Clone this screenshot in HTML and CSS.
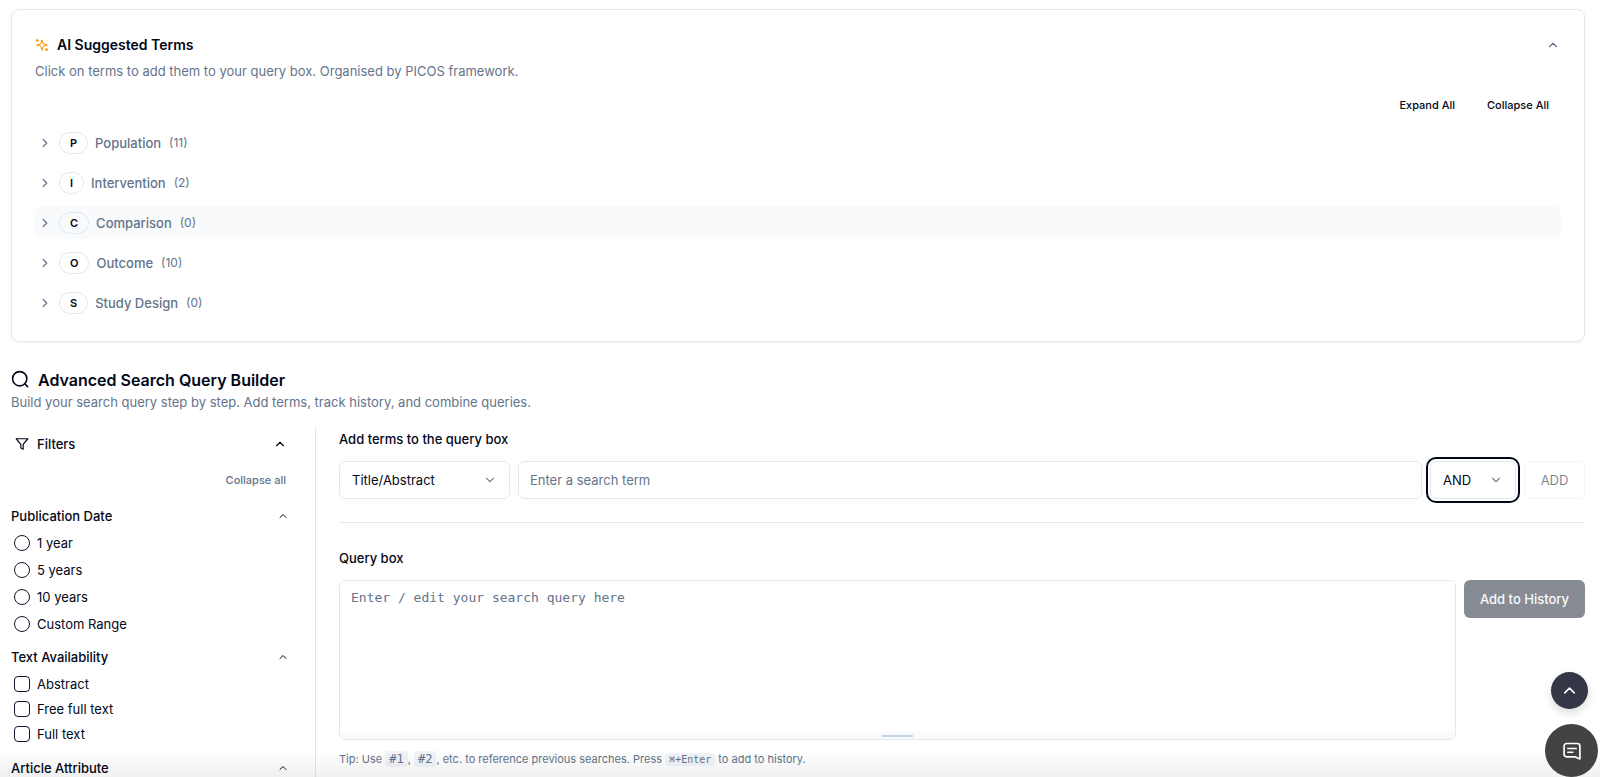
FILE: index.html
```html
<!DOCTYPE html>
<html lang="en">
<head>
    <meta charset="UTF-8">
    <meta name="viewport" content="width=device-width, initial-scale=1.0">
    <title>Advanced Search Query Builder</title>
    <link rel="stylesheet" href="styles.css">
</head>
<body>
    <!-- Shared icons -->
    <svg class="sprite" aria-hidden="true">
        <symbol id="chevron-up" viewBox="0 0 24 24"><path d="m18 15-6-6-6 6"/></symbol>
        <symbol id="chevron-down" viewBox="0 0 24 24"><path d="m6 9 6 6 6-6"/></symbol>
        <symbol id="chevron-right" viewBox="0 0 24 24"><path d="m9 18 6-6-6-6"/></symbol>
    </svg>

    <div class="page">
        <section class="card">
            <div class="card-header">
                <svg class="icon sparkles" viewBox="0 0 24 24"><path d="M9.937 15.5A2 2 0 0 0 8.5 14.063l-6.135-1.582a.5.5 0 0 1 0-.962L8.5 9.936A2 2 0 0 0 9.937 8.5l1.582-6.135a.5.5 0 0 1 .963 0L14.063 8.5A2 2 0 0 0 15.5 9.937l6.135 1.581a.5.5 0 0 1 0 .964L15.5 14.063a2 2 0 0 0-1.437 1.437l-1.582 6.135a.5.5 0 0 1-.963 0z" transform="translate(1.500 1.500) scale(0.875)"/><path d="M4 2v4M6 4H2M20 18v4M22 20h-4"/></svg>
                <h2>AI Suggested Terms</h2>
                <button type="button" class="icon-button" aria-label="Collapse suggested terms"><svg class="icon"><use href="#chevron-up"/></svg></button>
            </div>
            <p class="subtitle">Click on terms to add them to your query box. Organised by PICOS framework.</p>
            <div class="card-actions">
                <button type="button">Expand All</button>
                <button type="button">Collapse All</button>
            </div>
            <div class="terms">
                <button type="button" class="term"><svg class="icon"><use href="#chevron-right"/></svg><span class="pill">P</span><span>Population</span><span class="count">(11)</span></button>
                <button type="button" class="term"><svg class="icon"><use href="#chevron-right"/></svg><span class="pill">I</span><span>Intervention</span><span class="count">(2)</span></button>
                <button type="button" class="term active"><svg class="icon"><use href="#chevron-right"/></svg><span class="pill">C</span><span>Comparison</span><span class="count">(0)</span></button>
                <button type="button" class="term"><svg class="icon"><use href="#chevron-right"/></svg><span class="pill">O</span><span>Outcome</span><span class="count">(10)</span></button>
                <button type="button" class="term"><svg class="icon"><use href="#chevron-right"/></svg><span class="pill">S</span><span>Study Design</span><span class="count">(0)</span></button>
            </div>
        </section>

        <header class="builder-header">
            <h1><svg class="icon" viewBox="0 0 24 24"><circle cx="11" cy="11" r="9"/><path d="m21 21-3.600-3.600"/></svg>Advanced Search Query Builder</h1>
            <p class="subtitle">Build your search query step by step. Add terms, track history, and combine queries.</p>
        </header>

        <div class="builder">
            <aside class="filters">
                <button type="button" class="filters-toggle">
                    <svg class="icon" viewBox="0 0 24 24"><path d="M22 3H2l8 9.460V19l4 2v-8.540z"/></svg>
                    <span>Filters</span>
                    <svg class="icon end"><use href="#chevron-up"/></svg>
                </button>
                <button type="button" class="collapse-all">Collapse all</button>

                <button type="button" class="group-title">Publication Date<svg class="icon"><use href="#chevron-up"/></svg></button>
                <div class="options dates">
                    <label><input type="radio" name="date">1 year</label>
                    <label><input type="radio" name="date">5 years</label>
                    <label><input type="radio" name="date">10 years</label>
                    <label><input type="radio" name="date">Custom Range</label>
                </div>

                <button type="button" class="group-title">Text Availability<svg class="icon"><use href="#chevron-up"/></svg></button>
                <div class="options">
                    <label><input type="checkbox">Abstract</label>
                    <label><input type="checkbox">Free full text</label>
                    <label><input type="checkbox">Full text</label>
                </div>

                <button type="button" class="group-title">Article Attribute<svg class="icon"><use href="#chevron-up"/></svg></button>
            </aside>

            <main class="query">
                <label class="label" for="term">Add terms to the query box</label>
                <div class="term-row">
                    <div class="select field-select">
                        <select aria-label="Search field"><option>Title/Abstract</option></select>
                        <svg class="icon"><use href="#chevron-down"/></svg>
                    </div>
                    <input type="text" id="term" class="term-input" placeholder="Enter a search term">
                    <div class="select operator focused">
                        <select aria-label="Operator"><option>AND</option><option>OR</option><option>NOT</option></select>
                        <svg class="icon"><use href="#chevron-down"/></svg>
                    </div>
                    <button type="button" class="add" disabled>ADD</button>
                </div>
                <hr>
                <label class="label" for="query">Query box</label>
                <div class="query-row">
                    <div class="query-box">
                        <textarea id="query" placeholder="Enter / edit your search query here"></textarea>
                        <div class="resize"></div>
                    </div>
                    <button type="button" class="history" disabled>Add to History</button>
                </div>
                <p class="tip">Tip: Use <code>#1</code>, <code>#2</code>, etc. to reference previous searches. Press <kbd>⌘+Enter</kbd> to add to history.</p>
            </main>
        </div>
    </div>

    <div class="fade"></div>
    <div class="floating">
        <button type="button" class="to-top" aria-label="Back to top"><svg class="icon"><use href="#chevron-up"/></svg></button>
        <button type="button" class="chat" aria-label="Open chat"><svg class="icon" viewBox="0 0 24 24"><path d="M21.500 21.500V6a3 3 0 0 0-3-3h-13a3 3 0 0 0-3 3v10a3 3 0 0 0 3 3h10z"/><path d="M7 9h10M7 13.500h6"/></svg></button>
    </div>
</body>
</html>
```

FILE: styles.css
```css
* {
    box-sizing: border-box;
}
body {
    margin: 0;
    font-family: Inter, "Liberation Sans", sans-serif;
    font-size: 13px;
    line-height: 20px;
    color: #020817;
    background-color: #fff;
}
button, input, select, textarea {
    font: inherit;
    color: inherit;
}
button {
    border: none;
    padding: 0;
    background: none;
    cursor: pointer;
}
h1, h2, p {
    margin: 0;
}
.sprite {
    display: none;
}
.icon {
    width: 14px;
    height: 14px;
    flex: none;
    fill: none;
    stroke: currentColor;
    stroke-width: 2;
    stroke-linecap: round;
    stroke-linejoin: round;
}
.page {
    height: 100vh;
    overflow: hidden;
    padding: 9px 15px 0 11px;
}

/* Suggested terms */
.card {
    border: 1px solid #e2e8f0;
    border-radius: 8px;
    padding: 24px 23px 22px;
    box-shadow: 0 1px 2px rgba(0, 0, 0, 0.05);
}
.card-header {
    display: flex;
    align-items: center;
    gap: 8px;
    height: 22px;
}
.card-header h2 {
    flex: 1;
    font-size: 14px;
    font-weight: 600;
}
.sparkles {
    color: #fb9a0e;
}
.icon-button {
    display: flex;
    padding: 0 1px;
    color: #64748b;
}
.subtitle {
    font-size: 13px;
    color: #64748b;
}
.card .subtitle {
    margin-top: 5px;
}
.card-actions {
    display: flex;
    justify-content: flex-end;
    gap: 8px;
    margin: 9px 0 6px;
}
.card-actions button {
    padding: 0 12px;
    height: 30px;
    font-size: 11px;
    font-weight: 500;
}
.terms {
    display: flex;
    flex-direction: column;
    gap: 7px;
}
.term {
    display: flex;
    align-items: center;
    gap: 7px;
    height: 33px;
    padding: 0 3px;
    border-radius: 6px;
    font-weight: 500;
    color: #64748b;
}
.term.active {
    background-color: #f8fafc;
}
.pill {
    padding: 0 10px;
    border: 1px solid #e2e8f0;
    border-radius: 11px;
    font-size: 11px;
    font-weight: 600;
    color: #020817;
}
.count {
    margin-left: 1px;
    font-size: 12px;
    font-weight: 400;
}

/* Builder */
.builder-header {
    margin-top: 25px;
}
.builder-header h1 {
    display: flex;
    align-items: center;
    gap: 8px;
    height: 25px;
    font-size: 16px;
    font-weight: 600;
}
.builder-header h1 .icon {
    width: 19px;
    height: 19px;
}
.builder {
    display: flex;
    margin-top: 15px;
}
.filters {
    width: 305px;
    flex: none;
    height: 400px;
    padding-right: 23px;
    border-right: 1px solid #e2e8f0;
}
.filters-toggle {
    display: flex;
    align-items: center;
    gap: 8px;
    width: 100%;
    height: 34px;
    padding: 0 5px 0 4px;
    font-weight: 500;
}
.filters-toggle .end {
    margin-left: auto;
}
.collapse-all {
    display: block;
    margin: 9px 6px 16px auto;
    font-size: 11px;
    font-weight: 500;
    color: #64748b;
}
.group-title {
    display: flex;
    justify-content: space-between;
    align-items: center;
    width: 100%;
    font-weight: 500;
}
.group-title .icon {
    width: 12px;
    height: 12px;
    margin-right: 3px;
}
.options {
    display: flex;
    flex-direction: column;
    gap: 5px;
    padding: 7px 0 14px 3px;
}
.dates {
    gap: 7px;
    padding-bottom: 13px;
}
.options label {
    display: flex;
    align-items: center;
    gap: 7px;
}
.options input {
    appearance: none;
    width: 16px;
    height: 16px;
    margin: 0;
    border: 1px solid #0f172a;
    border-radius: 4px;
}
.options input[type="radio"] {
    border-radius: 50%;
}
.query {
    flex: 1;
    padding: 2px 0 0 23px;
}
.label {
    display: block;
    font-weight: 500;
}
.term-row {
    display: flex;
    gap: 8px;
    margin-top: 12px;
}
.select {
    position: relative;
    width: 171px;
    height: 38px;
}
.select.operator {
    width: 86px;
}
.select select {
    appearance: none;
    width: 100%;
    height: 100%;
    padding: 0 12px;
    border: 1px solid #e2e8f0;
    border-radius: 6px;
    background: none;
    outline: none;
}
.select.focused select {
    outline: 2px solid #020817;
    outline-offset: 2px;
}
.select .icon {
    position: absolute;
    right: 13px;
    top: 12px;
    color: #818591;
    pointer-events: none;
}
.term-input {
    flex: 1;
    min-width: 0;
    padding: 0 11px;
    border: 1px solid #e2e8f0;
    border-radius: 6px;
}
::placeholder {
    color: #64748b;
    opacity: 1;
}
.add {
    width: 61px;
    border: 1px solid #e2e8f0;
    border-radius: 6px;
    opacity: 0.5;
}
hr {
    margin: 23px 0 25px;
    border: none;
    border-top: 1px solid #e2e8f0;
}
.query-row {
    display: flex;
    align-items: flex-start;
    gap: 8px;
    margin-top: 12px;
}
.query-box {
    flex: 1;
    display: flex;
    flex-direction: column;
    height: 160px;
    border: 1px solid #e2e8f0;
    border-radius: 6px;
    overflow: hidden;
}
.query-box textarea {
    flex: 1;
    padding: 7px 11px;
    border: none;
    resize: none;
    font-family: "DejaVu Sans Mono", monospace;
    font-size: 13px;
    line-height: 20px;
}
.resize {
    display: flex;
    justify-content: center;
    align-items: center;
    height: 7px;
    background-color: #f8fafc;
}
.resize::before {
    content: "";
    width: 31px;
    height: 2px;
    background-color: #cbd5e1;
}
.history {
    width: 121px;
    height: 38px;
    border-radius: 6px;
    background-color: #878b94;
    color: #f8fafc;
    font-weight: 500;
}
.tip {
    margin-top: 9px;
    font-size: 11px;
    color: #64748b;
}
.tip code, .tip kbd {
    padding: 1px 4px;
    border-radius: 4px;
    background-color: #f1f5f9;
    font-family: "DejaVu Sans Mono", monospace;
    font-size: 12px;
}
.tip kbd {
    font-size: 10px;
}

/* Overlays */
.fade {
    position: fixed;
    left: 0;
    right: 0;
    bottom: 0;
    height: 28px;
    background: linear-gradient(rgba(0, 0, 0, 0), rgba(0, 0, 0, 0.06));
    pointer-events: none;
}
.floating {
    position: fixed;
    right: 2px;
    bottom: 0;
    display: flex;
    flex-direction: column;
    align-items: center;
    gap: 15px;
}
.floating button {
    display: flex;
    justify-content: center;
    align-items: center;
    border-radius: 50%;
    color: #fff;
}
.to-top {
    width: 37px;
    height: 37px;
    margin-right: 5px;
    background-color: #333746;
    box-shadow: 0 4px 8px rgba(0, 0, 0, 0.15);
}
.chat {
    width: 53px;
    height: 53px;
    background-color: #434343;
}
.to-top .icon {
    width: 19px;
    height: 19px;
}
.chat .icon {
    width: 20px;
    height: 20px;
}
```
